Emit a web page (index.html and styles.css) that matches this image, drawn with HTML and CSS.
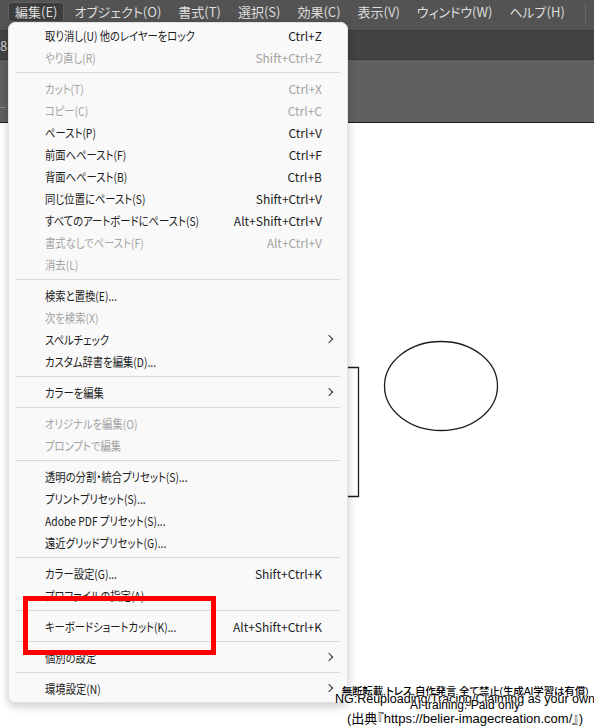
FILE: index.html
```html
<!DOCTYPE html>
<html lang="ja">
<head>
    <meta charset="UTF-8">
    <title>編集メニュー</title>
    <link rel="stylesheet" href="styles.css">
</head>
<body>

<div class="app">

    <header class="menubar">
        <span class="menubar-item is-open">編集(E)</span>
        <span class="menubar-item">オブジェクト(O)</span>
        <span class="menubar-item">書式(T)</span>
        <span class="menubar-item">選択(S)</span>
        <span class="menubar-item">効果(C)</span>
        <span class="menubar-item">表示(V)</span>
        <span class="menubar-item">ウィンドウ(W)</span>
        <span class="menubar-item">ヘルプ(H)</span>
        <span class="menubar-divider"></span>
    </header>

    <div class="toolbar"><span class="tab-num">8</span></div>
    <div class="controlbar"><span class="ruler-tick"></span></div>

    <div class="canvas">
        <svg class="artwork" width="594" height="603" viewBox="0 0 594 603">
            <path d="M300 244.5H358.5V373.5H300" fill="none" stroke="#1c1c1c" stroke-width="1.3"/>
            <ellipse cx="441" cy="263" rx="56.5" ry="44.5" fill="none" stroke="#1c1c1c" stroke-width="1.3"/>
        </svg>
    </div>

    <!-- dropdown of 編集(E) -->
    <ul class="dropdown">
        <li class="item"><span class="label">取り消し(U) 他のレイヤーをロック</span><span class="keys">Ctrl+Z</span></li>
        <li class="item off"><span class="label">やり直し(R)</span><span class="keys">Shift+Ctrl+Z</span></li>
        <li class="sep"></li>
        <li class="item off"><span class="label">カット(T)</span><span class="keys">Ctrl+X</span></li>
        <li class="item off"><span class="label">コピー(C)</span><span class="keys">Ctrl+C</span></li>
        <li class="item"><span class="label">ペースト(P)</span><span class="keys">Ctrl+V</span></li>
        <li class="item"><span class="label">前面へペースト(F)</span><span class="keys">Ctrl+F</span></li>
        <li class="item"><span class="label">背面へペースト(B)</span><span class="keys">Ctrl+B</span></li>
        <li class="item"><span class="label">同じ位置にペースト(S)</span><span class="keys">Shift+Ctrl+V</span></li>
        <li class="item"><span class="label">すべてのアートボードにペースト(S)</span><span class="keys">Alt+Shift+Ctrl+V</span></li>
        <li class="item off"><span class="label">書式なしでペースト(F)</span><span class="keys">Alt+Ctrl+V</span></li>
        <li class="item off"><span class="label">消去(L)</span></li>
        <li class="sep"></li>
        <li class="item"><span class="label">検索と置換(E)...</span></li>
        <li class="item off"><span class="label">次を検索(X)</span></li>
        <li class="item sub"><span class="label">スペルチェック</span></li>
        <li class="item"><span class="label">カスタム辞書を編集(D)...</span></li>
        <li class="sep"></li>
        <li class="item sub"><span class="label">カラーを編集</span></li>
        <li class="sep"></li>
        <li class="item off"><span class="label">オリジナルを編集(O)</span></li>
        <li class="item off"><span class="label">プロンプトで編集</span></li>
        <li class="sep"></li>
        <li class="item"><span class="label">透明の分割・統合プリセット(S)...</span></li>
        <li class="item"><span class="label">プリントプリセット(S)...</span></li>
        <li class="item"><span class="label">Adobe PDF プリセット(S)...</span></li>
        <li class="item"><span class="label">遠近グリッドプリセット(G)...</span></li>
        <li class="sep"></li>
        <li class="item"><span class="label">カラー設定(G)...</span><span class="keys">Shift+Ctrl+K</span></li>
        <li class="item"><span class="label">プロファイルの指定(A)...</span></li>
        <li class="sep"></li>
        <li class="item"><span class="label">キーボードショートカット(K)...</span><span class="keys">Alt+Shift+Ctrl+K</span></li>
        <li class="sep"></li>
        <li class="item sub"><span class="label">個別の設定</span></li>
        <li class="sep"></li>
        <li class="item sub"><span class="label">環境設定(N)</span></li>
    </ul>

    <div class="highlight-box"></div>

    <div class="watermark">
        <p class="wm-line wm-ja">無断転載,トレス,自作発言 全て禁止(生成AI学習は有償)</p>
        <p class="wm-line wm-en">NG:Reuploading/Tracing/Claiming as your own</p>
        <p class="wm-line wm-tight">AI training: Paid only</p>
        <p class="wm-line wm-src">(出典『https://belier-imagecreation.com/』)</p>
    </div>

</div>

</body>
</html>
```

FILE: styles.css
```css
body {
    margin: 0;
    background: #fff;
}

.app {
    position: relative;
    width: 594px;
    height: 726px;
    overflow: hidden;
    display: flex;
    flex-direction: column;
    font-family: "Noto Sans CJK JP", sans-serif;
    font-feature-settings: "palt";
}

/* top menu bar */
.menubar {
    height: 31px;
    flex: none;
    display: flex;
    align-items: flex-start;
    gap: 3px;
    padding: 2px 0 0 8px;
    box-sizing: border-box;
    background: #535353;
    border-bottom: 1px solid #3b3b3b;
}
.menubar-item {
    height: 18px;
    line-height: 18px;
    padding: 0 6px;
    font-size: 13px;
    color: #dedede;
    border: 1px solid transparent;
    border-radius: 3px;
    white-space: nowrap;
}
.menubar-item.is-open {
    background: #3d3d3d;
    border-color: #626262;
}
.menubar-divider {
    width: 1px;
    height: 20px;
    margin: 1px 0 0 10px;
    background: #666;
}

.toolbar {
    height: 28px;
    flex: none;
    background: #434343;
    border-bottom: 1px solid #363636;
    position: relative;
}
.tab-num {
    position: absolute;
    left: 0;
    top: 5px;
    font-size: 13px;
    color: #d0d0d0;
}

.controlbar {
    height: 62px;
    flex: none;
    background: #606060;
    border-bottom: 1px solid #1d1d1d;
    position: relative;
}
.ruler-tick {
    position: absolute;
    left: 0;
    top: 47px;
    width: 6px;
    height: 1px;
    background: #8a8a8a;
}

.canvas {
    flex: 1;
    position: relative;
    background: #fff;
}
.artwork {
    position: absolute;
    left: 0;
    top: 0;
}

/* dropdown menu */
.dropdown {
    position: absolute;
    left: 8px;
    top: 22px;
    width: 340px;
    margin: 0;
    padding: 1px 0 3px;
    list-style: none;
    box-sizing: border-box;
    background: #f9f9f9;
    border: 1px solid #e2e2e2;
    border-radius: 7px;
    box-shadow: 0 3px 10px rgba(0, 0, 0, .22);
}
.item {
    height: 22px;
    display: flex;
    align-items: center;
    padding: 0 25px 0 36px;
    font-size: 12px;
    color: #1b1b1b;
    white-space: nowrap;
    position: relative;
}
.item.off {
    color: #a3a3a3;
}
.label {
    flex: 1;
    transform: scaleX(.86);
    transform-origin: left center;
}
.keys {
    text-align: right;
}
.item.sub::after {
    content: "";
    position: absolute;
    right: 15px;
    top: 8px;
    width: 5px;
    height: 5px;
    border-top: 1.2px solid #333;
    border-right: 1.2px solid #333;
    transform: rotate(45deg);
}
.sep {
    height: 9px;
    display: flex;
    align-items: center;
    padding: 0 7px;
}
.sep::before {
    content: "";
    flex: 1;
    border-top: 1px solid #dadada;
}

.highlight-box {
    position: absolute;
    left: 23px;
    top: 596px;
    width: 183px;
    height: 49px;
    border: 5px solid #ff0000;
}

.watermark {
    position: absolute;
    left: 334px;
    top: 686px;
    width: 262px;
    text-align: center;
    color: #000;
    text-shadow: 0 0 2px #fff, 0 0 2px #fff;
}
.wm-line {
    margin: 0;
    height: 10px;
    line-height: 10px;
    font-family: "Liberation Sans", sans-serif;
    font-size: 12px;
    white-space: nowrap;
}
.wm-ja {
    font-family: "Liberation Sans", "Noto Sans CJK JP", sans-serif;
    font-size: 10.5px;
    font-weight: 500;
    letter-spacing: -.15px;
}
.wm-en {
    margin-top: -2px;
    font-size: 12.5px;
}
.wm-tight {
    margin-top: -4px;
}
.wm-src {
    margin-top: 4px;
    font-size: 13px;
    font-family: "Liberation Sans", "Noto Sans CJK JP", sans-serif;
}
```
